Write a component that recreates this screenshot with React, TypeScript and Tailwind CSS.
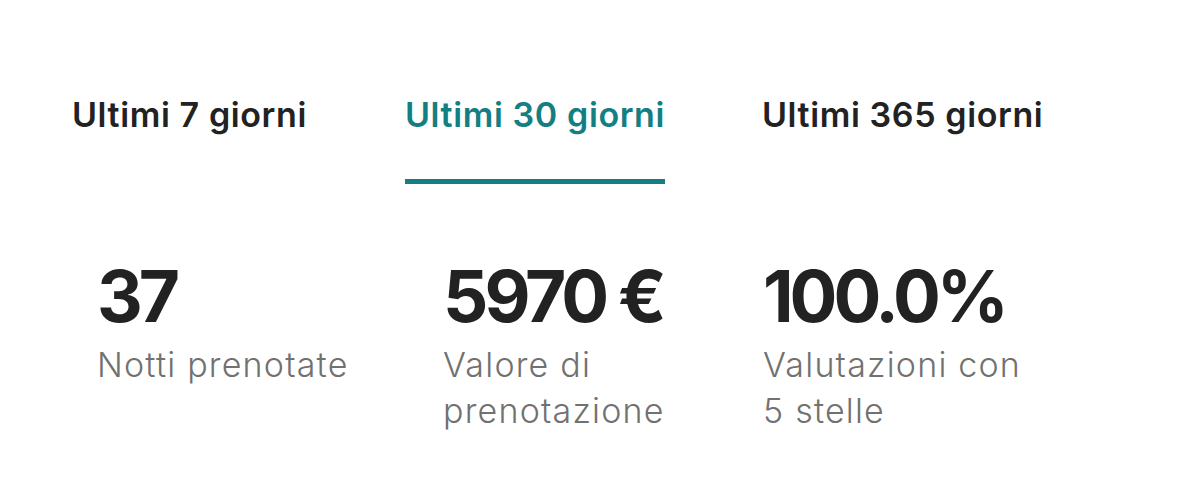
const tabs = ['Ultimi 7 giorni', 'Ultimi 30 giorni', 'Ultimi 365 giorni'];
const active = 1;

const stats = [
  { value: '37', label: 'Notti prenotate', w: 'w-[346px]' },
  { value: '5970 €', label: 'Valore di prenotazione', w: 'w-[320px]' },
  { value: '100.0%', label: 'Valutazioni con 5 stelle', w: 'w-[300px]' },
];

export default function App() {
  return (
    <div className="w-[1179px] h-[501px] bg-white pl-[72px] pt-[95px]" style={{ fontFamily: 'Inter, sans-serif' }}>
      <div className="flex">
        {tabs.map((t, i) => (
          <div key={t} className={i === 0 ? 'w-[333px]' : i === 1 ? 'w-[357px]' : 'w-[300px]'}>
            <div
              className={`inline-flex flex-col gap-[44px] text-[34px] leading-[40px] font-semibold tracking-[0.6px] ${
                i === active ? 'text-[#147f82]' : 'text-[#222222]'
              }`}
            >
              <span>{t}</span>
              <span className={`h-[5px] ${i === active ? 'bg-[#147f82]' : 'bg-transparent'}`} />
            </div>
          </div>
        ))}
      </div>
      <div className="flex mt-[77px] pl-[25px]">
        {stats.map((s) => (
          <div key={s.value} className={s.w}>
            <div className="text-[71px] leading-none font-bold text-[#222222] tracking-[-4px]">{s.value}</div>
            <div className="mt-[10px] w-[275px] text-[34px] leading-[46px] font-light tracking-[1.2px] text-[#717171]">{s.label}</div>
          </div>
        ))}
      </div>
    </div>
  );
}
